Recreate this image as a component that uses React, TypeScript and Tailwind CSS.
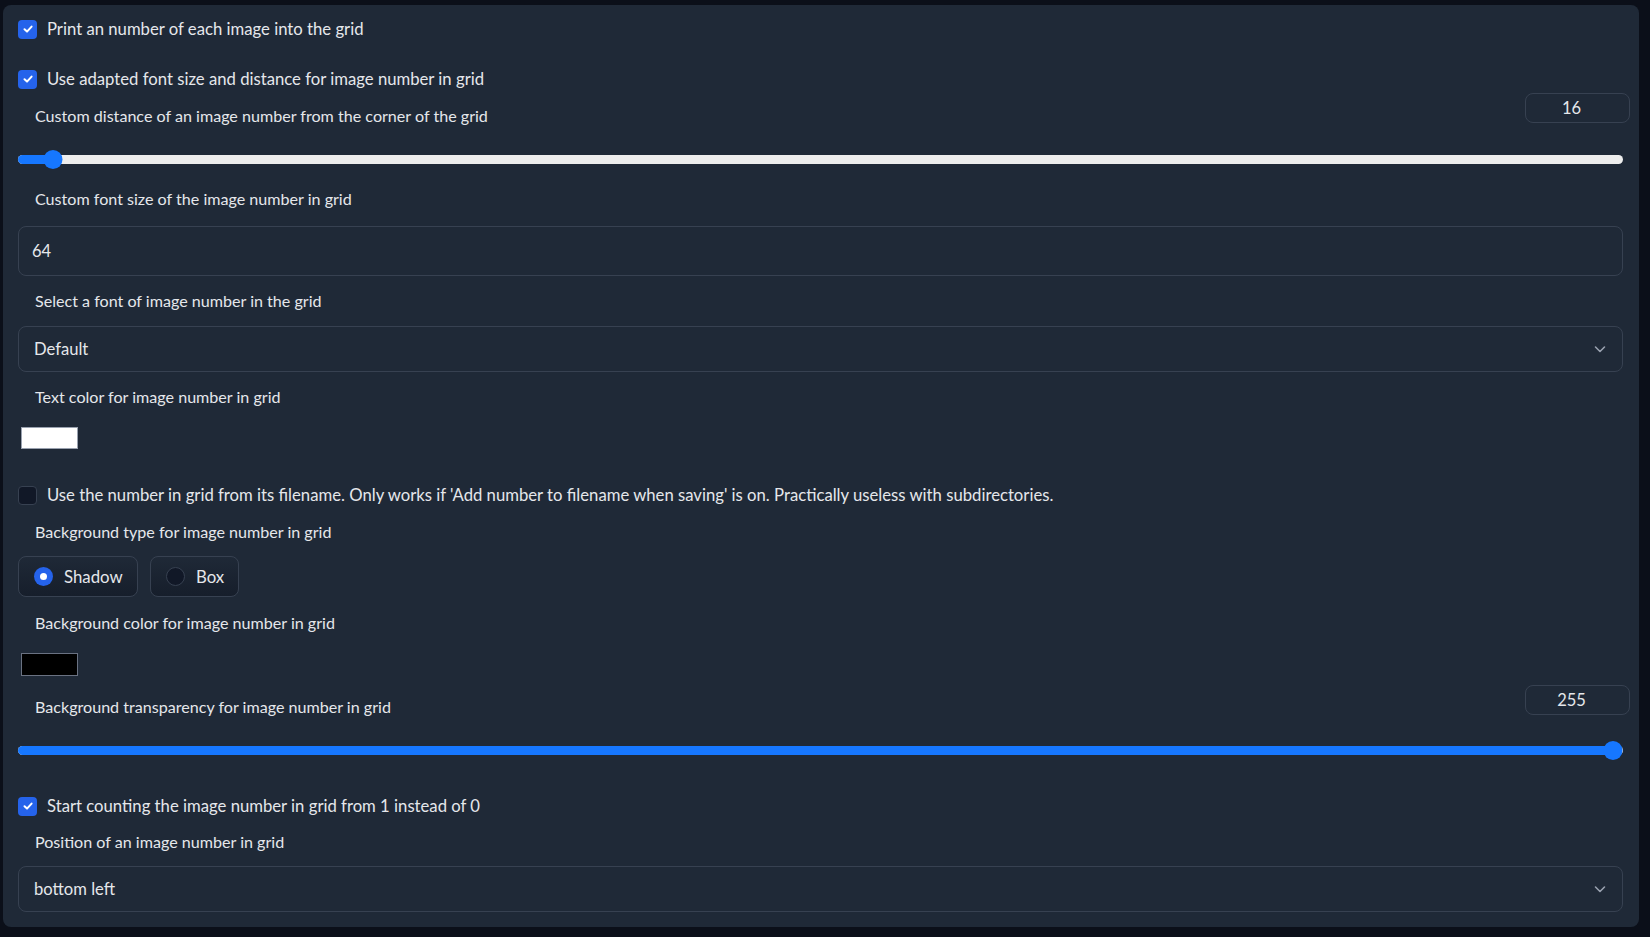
import React from "react";

const FONT = "font-['Lato','Liberation_Sans',sans-serif]";

function Check({ checked, label, className = "" }: { checked: boolean; label: string; className?: string }) {
  return (
    <div className={`flex items-center h-[18px] ${className}`}>
      {checked ? (
        <div className="w-[19px] h-[19px] rounded-[4px] bg-[#2563eb] flex items-center justify-center shrink-0">
          <svg width="12" height="12" viewBox="0 0 12 12" fill="none">
            <path d="M2.5 6.3 L5 8.6 L9.6 3.6" stroke="white" strokeWidth="2" strokeLinecap="round" strokeLinejoin="round" />
          </svg>
        </div>
      ) : (
        <div className="w-[19px] h-[19px] rounded-[4px] bg-[#111827] border border-[#374151] shrink-0" />
      )}
      <span className="ml-[10px] text-[16.7px] leading-[18px] text-gray-200">{label}</span>
    </div>
  );
}

function Label({ text, className = "" }: { text: string; className?: string }) {
  return <div className={`pl-[17px] text-[16.1px] leading-[24px] text-gray-200 ${className}`}>{text}</div>;
}

function Slider({ pct, className = "" }: { pct: number; className?: string }) {
  return (
    <div className={`relative h-[18px] flex items-center ${className}`}>
      <div className="w-full h-[9px] rounded-full bg-[#ededed] overflow-hidden">
        <div className="h-full bg-[#1677ff]" style={{ width: `${pct}%` }} />
      </div>
      <div
        className="absolute w-[19px] h-[19px] rounded-full bg-[#1677ff] -translate-x-1/2"
        style={{ left: `${pct}%` }}
      />
    </div>
  );
}

function Chevron() {
  return (
    <svg width="16" height="16" viewBox="0 0 16 16" fill="none" className="text-gray-400">
      <path d="M3.5 6 L8 10.5 L12.5 6" stroke="currentColor" strokeWidth="1.6" strokeLinecap="round" strokeLinejoin="round" />
    </svg>
  );
}

function Select({ value, className = "" }: { value: string; className?: string }) {
  return (
    <div className={`h-[46px] rounded-lg border border-[#374151] flex items-center justify-between pl-[15px] pr-[14px] ${className}`}>
      <span className="text-[16.6px] text-gray-200">{value}</span>
      <Chevron />
    </div>
  );
}

function NumBox({ value }: { value: string }) {
  return (
    <div className="w-[105px] h-[30px] rounded-lg border border-[#374151] flex items-center justify-center pr-[12px] text-[16.5px] text-gray-200">
      {value}
    </div>
  );
}

function Radio({ checked, label, w }: { checked: boolean; label: string; w: string }) {
  return (
    <div className={`${w} h-[41px] rounded-lg border border-[#374151] bg-gradient-to-b from-[#1f2937] to-[#161e2b] flex items-center pl-[15px]`}>
      {checked ? (
        <div className="w-[19px] h-[19px] rounded-full bg-[#2563eb] flex items-center justify-center">
          <div className="w-[7px] h-[7px] rounded-full bg-white" />
        </div>
      ) : (
        <div className="w-[19px] h-[19px] rounded-full bg-[#111827] border border-[#374151]" />
      )}
      <span className="ml-[11px] text-[16.8px] text-gray-200">{label}</span>
    </div>
  );
}

export default function App() {
  return (
    <div className={`w-full h-[937px] bg-[#0b0f19] pt-[5px] pl-[3px] pr-[11px] ${FONT}`}>
      <div className="h-[922px] bg-[#1f2937] rounded-lg pt-[15px] pl-[15px] pr-[16px] flex flex-col">
        <Check checked label="Print an number of each image into the grid" />
        <Check checked label="Use adapted font size and distance for image number in grid" className="mt-[32px]" />

        <div className="mt-[5px] h-[35px] flex justify-between">
          <Label text="Custom distance of an image number from the corner of the grid" className="mt-[11px]" />
          <div className="mr-[-7px]">
            <NumBox value="16" />
          </div>
        </div>
        <Slider pct={2.2} className="mt-[22px]" />

        <Label text="Custom font size of the image number in grid" className="mt-[19px]" />
        <div className="mt-[15px] h-[50px] rounded-lg border border-[#374151] flex items-center pl-[13px] text-[16.5px] text-gray-200">
          64
        </div>

        <Label text="Select a font of image number in the grid" className="mt-[13px]" />
        <Select value="Default" className="mt-[13px]" />

        <Label text="Text color for image number in grid" className="mt-[13px]" />
        <div className="mt-[18px] ml-[3px] w-[57px] h-[22px] bg-white border border-gray-400" />

        <Check
          checked={false}
          label="Use the number in grid from its filename. Only works if 'Add number to filename when saving' is on. Practically useless with subdirectories."
          className="mt-[37px]"
        />

        <Label text="Background type for image number in grid" className="mt-[16px]" />
        <div className="mt-[12px] flex gap-[12px]">
          <Radio checked label="Shadow" w="w-[120px]" />
          <Radio checked={false} label="Box" w="w-[89px]" />
        </div>

        <Label text="Background color for image number in grid" className="mt-[14px]" />
        <div className="mt-[18px] ml-[3px] w-[57px] h-[23px] bg-black border border-gray-500" />

        <div className="mt-[9px] h-[34px] flex justify-between">
          <Label text="Background transparency for image number in grid" className="mt-[10px]" />
          <div className="mr-[-7px]">
            <NumBox value="255" />
          </div>
        </div>
        <Slider pct={99.4} className="mt-[22px]" />

        <Check checked label="Start counting the image number in grid from 1 instead of 0" className="mt-[38px]" />

        <Label text="Position of an image number in grid" className="mt-[15px]" />
        <Select value="bottom left" className="mt-[12px]" />
      </div>
    </div>
  );
}
